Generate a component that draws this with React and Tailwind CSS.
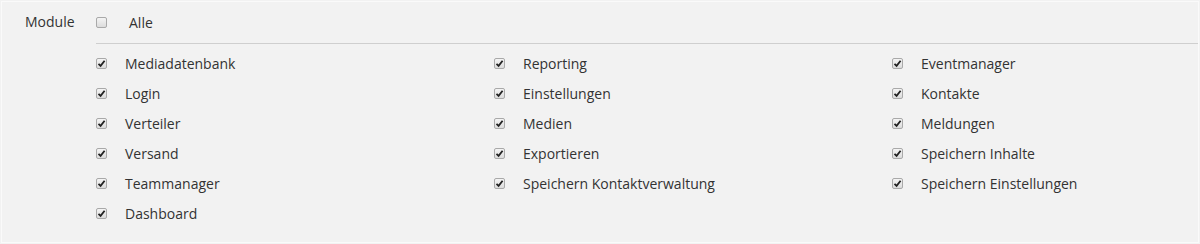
const columns = [
  ["Mediadatenbank", "Login", "Verteiler", "Versand", "Teammanager", "Dashboard"],
  ["Reporting", "Einstellungen", "Medien", "Exportieren", "Speichern Kontaktverwaltung"],
  ["Eventmanager", "Kontakte", "Meldungen", "Speichern Inhalte", "Speichern Einstellungen"],
];

function Box({ checked }) {
  return (
    <span className="flex h-[11px] w-[11px] shrink-0 items-center justify-center rounded-[2px] border border-[#a9a9a9] bg-gradient-to-b from-[#f4f4f4] to-[#dcdcdc]">
      {checked ? (
        <svg width="9" height="9" viewBox="0 0 9 9" aria-hidden="true">
          <path d="M1.5 4.8 L3.6 6.8 L7.6 1.8" fill="none" stroke="#222" strokeWidth="1.8" />
        </svg>
      ) : null}
    </span>
  );
}

export default function App() {
  return (
    <div className="h-[244px] w-full overflow-hidden bg-[#f2f2f2] p-px" style={{ fontFamily: '"Open Sans", "Noto Sans", sans-serif' }}>
      <div className="flex h-full border border-[#fafafa] text-[14px] text-[#333]">
        <div className="w-[94px] shrink-0 pl-[23px] pt-[5px] leading-[30px]">Module</div>
        <div className="min-w-0 flex-1 pt-[5px]">
          <label className="flex h-[30px] items-center">
            <Box checked={false} />
            <span className="ml-[22px]">Alle</span>
          </label>
          <div className="mt-[6px] h-px bg-[#cfcfcf]" />
          <div className="mt-[4px] grid grid-cols-[398px_398px_1fr]">
            {columns.map((col, i) => (
              <div key={i} className="min-w-0">
                {col.map((name) => (
                  <label key={name} className="flex h-[30px] items-center">
                    <Box checked />
                    <span className="ml-[18px] whitespace-nowrap">{name}</span>
                  </label>
                ))}
              </div>
            ))}
          </div>
        </div>
      </div>
    </div>
  );
}
